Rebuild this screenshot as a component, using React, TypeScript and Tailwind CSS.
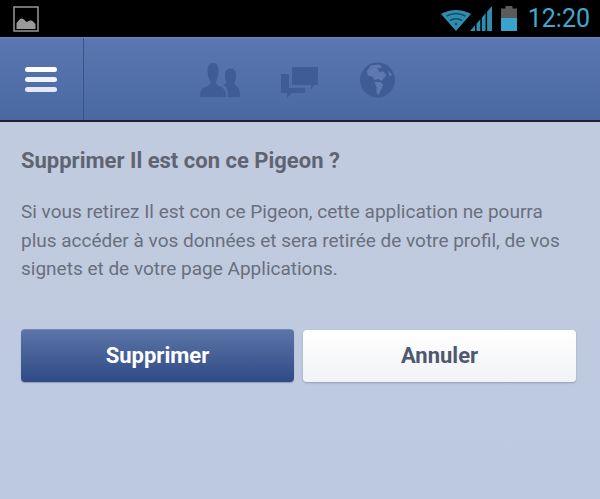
import React from "react";

function Wifi() {
  return (
    <svg width="30" height="23" viewBox="0 0 30 23" className="block">
      <path d="M15 23 L0 6 Q15 -2 30 6 Z" fill="#2f8db0" />
      <g fill="none" stroke="#124a60" strokeWidth="1.6">
        <path d="M5.5 8 Q15 3 24.5 8" />
        <path d="M9 12.5 Q15 9 21 12.5" />
      </g>
      <circle cx="15" cy="16" r="1.2" fill="#124a60" />
    </svg>
  );
}

function Signal() {
  return (
    <svg width="22" height="25" viewBox="0 0 22 25" className="block">
      <path d="M0 25 L22 0 V25 Z" fill="#2f8db0" />
      <g fill="#000">
        <rect x="5" y="0" width="1.5" height="25" />
        <rect x="10.3" y="0" width="1.5" height="25" />
        <rect x="15.6" y="0" width="1.5" height="25" />
      </g>
    </svg>
  );
}

function Battery() {
  return (
    <svg width="16" height="25" viewBox="0 0 16 25" className="block">
      <rect x="4.5" y="0" width="7" height="3" fill="#5b5b5b" />
      <rect x="0" y="2.5" width="16" height="9.5" fill="#5b5b5b" />
      <rect x="0" y="12" width="16" height="13" fill="#3aa3cb" />
    </svg>
  );
}

function PictureIcon() {
  return (
    <svg width="26" height="26" viewBox="0 0 26 26" className="block">
      <rect x="1" y="1" width="24" height="24" fill="#000" stroke="#8f8f8f" strokeWidth="1.6" />
      <path d="M3.5 23 V17 L7 13 Q9 12 11 13.5 L13.5 16 L17 14.5 Q19 14 20 15.5 L22.5 18 V23 Z" fill="#9a9a9a" />
    </svg>
  );
}

function Friends() {
  return (
    <svg width="40" height="34" viewBox="0 0 40 34" className="block" fill="#3f5c96">
      <path d="M0 34 Q0 26 4 24.5 Q9 23 10.5 20.5 V18.5 Q7.5 14 7.5 8 Q7.5 0 13 0 Q18.5 0 18.5 8 Q18.5 14 16 18.5 V20.5 Q18 23 22 24.5 Q25.5 26 26 34 Z" />
      <path d="M28 34 Q28 27 26 24 Q24.5 23 23.5 22 Q25.5 21 26.5 19.5 Q24.5 16 25 11 Q25.5 5.5 30.5 5.5 Q35.5 5.5 36 11 Q36.5 16 34.5 19.5 V21 Q36.5 23 38 24.5 Q40 26 40 34 Z" />
    </svg>
  );
}

function Chat() {
  return (
    <svg width="37" height="31" viewBox="0 0 37 31" className="block" fill="#3f5c96">
      <path d="M11 0 H37 V18 H33 L30 23 V18 H11 Z" />
      <path d="M0 7 H8 V21 H24 V26 H11 L6 31 V26 H0 Z" />
    </svg>
  );
}

function Globe() {
  return (
    <svg width="35" height="36" viewBox="0 0 36 36" className="block">
      <circle cx="18" cy="18" r="18" fill="#3f5c96" />
      <path d="M11 3 L20 2 L23 5 L18 6 L20 10 L24 9 L27 13 L24 17 L22 19 L19 17 L15 18 L13 15 L8 13 L7 9 Z" fill="#5d79af" />
      <path d="M15 20 L21 20 L24 23 L21 29 L19 34 L17 31 L17 26 Z" fill="#5d79af" />
      <path d="M29 8 L33 13 L30 14 Z" fill="#5d79af" />
    </svg>
  );
}

export default function App() {
  return (
    <div className="w-[600px] h-[499px] overflow-hidden flex flex-col font-['Roboto',sans-serif] bg-gradient-to-b from-[#c2cce0] to-[#bdc9df]">
      <div className="h-[37px] bg-black flex items-center shrink-0">
        <div className="pl-[13px]"><PictureIcon /></div>
        <div className="ml-auto flex items-center pr-[10px]">
          <div className="-mr-[1px] mt-[1px]"><Wifi /></div>
          <Signal />
          <div className="ml-[9px]"><Battery /></div>
          <span className="ml-[11px] text-[25px] leading-none text-[#40a9d1] font-normal">12:20</span>
        </div>
      </div>
      <div className="h-[85px] shrink-0 flex bg-gradient-to-b from-[#5a77b0] to-[#4a68a3] border-t border-t-[#6f88b8] border-b-[2px] border-b-[#1c2030]">
        <div className="w-[84px] shrink-0 flex flex-col items-center justify-center gap-[5px] border-r border-r-[#3a5488] pr-[1px] pt-[1px]">
          <div className="w-[32px] h-[5px] rounded-full bg-white" />
          <div className="w-[32px] h-[5px] rounded-full bg-[#f0f3fa]" />
          <div className="w-[32px] h-[5px] rounded-full bg-[#e3e8f4]" />
        </div>
        <div className="flex items-start pl-[116px]">
          <div className="mt-[25px]"><Friends /></div>
          <div className="ml-[41px] mt-[29px]"><Chat /></div>
          <div className="ml-[42px] mt-[24px]"><Globe /></div>
        </div>
      </div>
      <div className="flex-1 px-[21px] pt-[26px]">
        <h1 className="text-[22px] leading-[26px] font-bold text-[#5f6472]">Supprimer Il est con ce Pigeon ?</h1>
        <p className="mt-[24px] text-[19px] leading-[28.5px] text-[#696f7e] whitespace-nowrap">
          Si vous retirez Il est con ce Pigeon, cette application ne pourra<br />
          plus accéder à vos données et sera retirée de votre profil, de vos<br />
          signets et de votre page Applications.
        </p>
        <div className="mt-[45px] grid grid-cols-2 gap-[9px] w-[555px]">
          <button className="h-[53px] rounded-[4px] bg-gradient-to-b from-[#5c75a8] to-[#2f4a85] border-t border-t-[#7088b4] shadow-[0_1px_1px_#8f9cb8] text-white font-bold text-[22px]">Supprimer</button>
          <button className="h-[52px] mt-[1px] rounded-[4px] bg-gradient-to-b from-white to-[#f2f3f6] shadow-[0_1px_2px_#8f9cb8] text-[#50586f] font-bold text-[22px]">Annuler</button>
        </div>
      </div>
    </div>
  );
}
